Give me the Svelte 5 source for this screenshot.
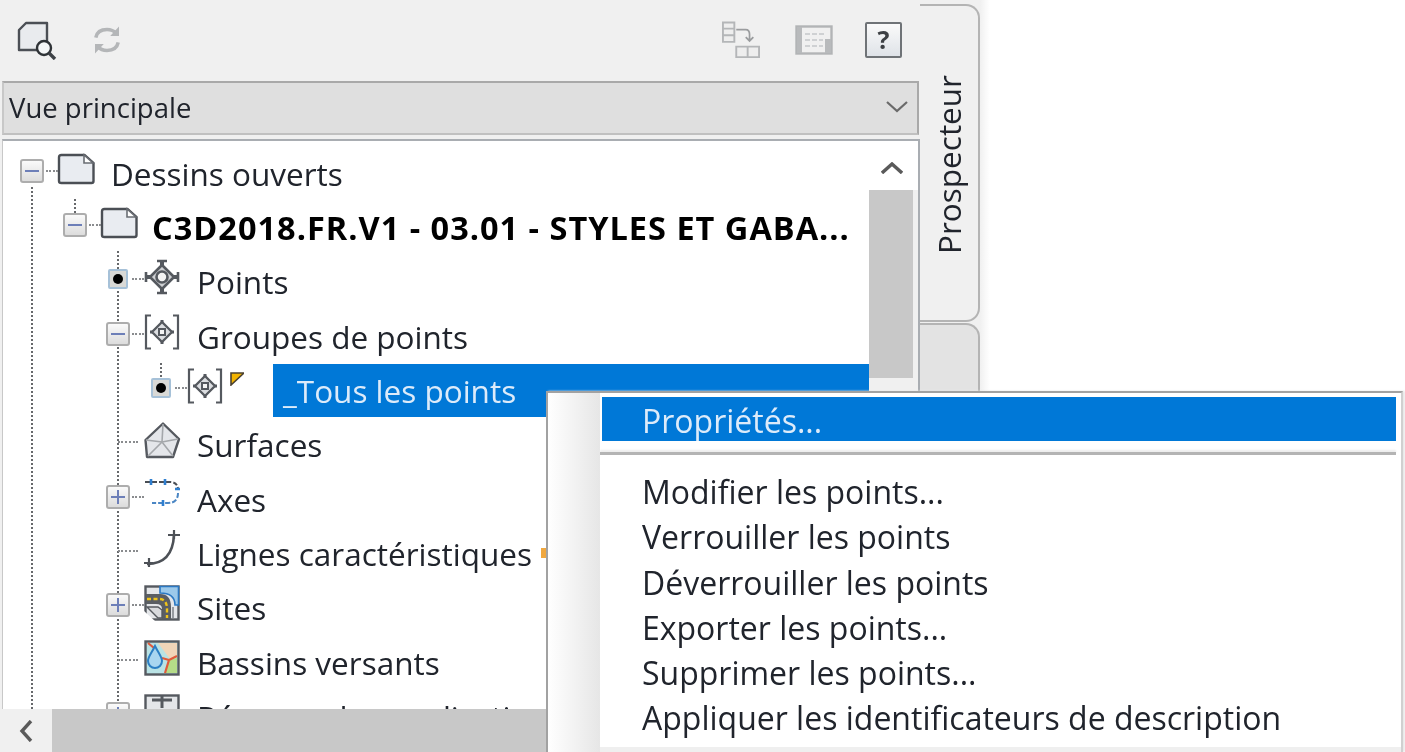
<script lang="ts">
  type Row = { label: string; depth: number; toggle: string; icon: string; bold?: boolean; selected?: boolean; mark?: boolean };

  const rows: Row[] = [
    { label: 'Dessins ouverts', depth: 0, toggle: 'minus', icon: 'doc' },
    { label: 'C3D2018.FR.V1 - 03.01 - STYLES ET GABA...', depth: 1, toggle: 'minus', icon: 'doc', bold: true },
    { label: 'Points', depth: 2, toggle: 'dot', icon: 'point' },
    { label: 'Groupes de points', depth: 2, toggle: 'minus', icon: 'group' },
    { label: '_Tous les points', depth: 3, toggle: 'dot', icon: 'group', selected: true },
    { label: 'Surfaces', depth: 2, toggle: 'none', icon: 'surface' },
    { label: 'Axes', depth: 2, toggle: 'plus', icon: 'axis' },
    { label: 'Lignes caractéristiques', depth: 2, toggle: 'none', icon: 'feature', mark: true },
    { label: 'Sites', depth: 2, toggle: 'plus', icon: 'site' },
    { label: 'Bassins versants', depth: 2, toggle: 'none', icon: 'basin' },
    { label: 'Réseaux de canalisations', depth: 2, toggle: 'plus', icon: 'pipe' }
  ];

  const menuItems = [
    'Modifier les points...',
    'Verrouiller les points',
    'Déverrouiller les points',
    'Exporter les points...',
    'Supprimer les points...',
    'Appliquer les identificateurs de description'
  ];
</script>

{#snippet icon(kind: string)}
  <svg class="icon" viewBox="0 0 36 36" fill="none">
    {#if kind === 'doc'}
      <path d="M1.5 4.5 Q1.5 2 4 2 H27 L36 10 V28 Q36 30 34 30 H4 Q1.5 30 1.5 28 Z" transform="translate(-.5 2)" fill="#e9ecf1" stroke="#4b4f55" stroke-width="2.4" />
      <path d="M26 4 V12 H35 Z" fill="#fff" stroke="#6a6e74" stroke-width="1.6" />
    {:else if kind === 'point'}
      <path d="M18 1 V35 M1 18 H35" stroke="#55595f" stroke-width="4" />
      <path d="M13 2 H23 M13 34 H23 M2 13 V23 M34 13 V23" stroke="#55595f" stroke-width="2.6" />
      <path d="M18 6 L30 18 L18 30 L6 18 Z" fill="#cfd1d4" stroke="#55595f" stroke-width="2.6" stroke-linejoin="round" />
      <circle cx="18" cy="18" r="5.5" fill="#f4f4f4" stroke="#55595f" stroke-width="2.6" />
    {:else if kind === 'group'}
      <path d="M7 1.5 H2 V34.5 H7 M29 1.5 H34 V34.5 H29" stroke="#55595f" stroke-width="2.2" />
      <path d="M18 6 V10 M18 26 V30 M6 18 H10 M26 18 H30" stroke="#55595f" stroke-width="3" />
      <path d="M18 8 L28 18 L18 28 L8 18 Z" fill="#dcdee1" stroke="#55595f" stroke-width="2.4" stroke-linejoin="round" />
      <rect x="15" y="15" width="6" height="6" fill="#f4f4f4" stroke="#55595f" stroke-width="2" />
    {:else if kind === 'surface'}
      <path d="M19 1.5 L35 17 L29 35 H3 L1.5 18 Z" fill="#e4e6ea" stroke="#55595f" stroke-width="2.4" stroke-linejoin="round" />
      <path d="M19 2 L18 20 L29 34 M18 20 L2 18 M18 20 L34 17 M18 20 L4 34" stroke="#a4a7ab" stroke-width="1.6" />
    {:else if kind === 'axis'}
      <path d="M1 5 H26 Q34 5 34 13" stroke="#4a4e54" stroke-width="2" stroke-dasharray="5 2" />
      <path d="M34 16 Q34 26 24 26 H8" stroke="#4a86c4" stroke-width="2" stroke-dasharray="5 2" />
      <path d="M7 2 V8 M21 2 V8 M31 12 H36 M19 23 V29" stroke="#2f7fd0" stroke-width="2.6" />
    {:else if kind === 'feature'}
      <path d="M3 33 C20 33 29 24 30 4" stroke="#4d5157" stroke-width="2.6" />
      <path d="M24 4 H36 M30 -1 V8 M5 27 V36 M0 32 H9" stroke="#4d5157" stroke-width="2.2" />
    {:else if kind === 'site'}
      <rect x="1.5" y="1.5" width="33" height="33" fill="#e4e6e9" stroke="#55595f" stroke-width="2.4" />
      <path d="M16 1.5 H34.5 V20 H31 Q31 8 16 8 Z" fill="#9cc9ea" stroke="#2b78c2" stroke-width="1.6" />
      <path d="M2 9 H16 Q27 9 27 22 V34 H18 V24 Q18 19 12 19 H2 Z" fill="#5a5e63" />
      <path d="M3 14 H15 Q23 14 23 24 V33" stroke="#f0c419" stroke-width="2.4" stroke-dasharray="4 2.5" />
      <path d="M0 26 L11 36 H0 Z" fill="#fff" />
      <path d="M3 22 L14 33 H18 V25 L14 22 Z" fill="#d8dadd" stroke="#55595f" stroke-width="1.4" />
      <path d="M29 22 V34" stroke="#7d8186" stroke-width="1.5" />
    {:else if kind === 'basin'}
      <rect x="1.5" y="1.5" width="33" height="33" fill="#b9e2e4" stroke="#55595f" stroke-width="2.4" />
      <path d="M14 3 H33 V16 L26 19 Z" fill="#f1d5b8" />
      <path d="M25 20 L33 18 V33 H21 Z" fill="#b5dc88" />
      <path d="M33 16 L25 20 L21 33 M25 20 L18 18 M4 3 L10 8" stroke="#e05a3a" stroke-width="2.2" />
      <path d="M11 6 C7 14 4 17 4 21 A7 7 0 0 0 18 21 C18 17 15 14 11 6 Z" fill="#a9d6f0" stroke="#2c7fc4" stroke-width="2" />
    {:else if kind === 'pipe'}
      <rect x="1.5" y="1.5" width="33" height="33" fill="#e4e6e9" stroke="#55595f" stroke-width="2.4" />
      <path d="M8 6 H28 M18 1 V14" stroke="#55595f" stroke-width="3" />
    {/if}
  </svg>
{/snippet}

<div class="screen">
  <div class="palette">
    <div class="panel">
      <div class="toolbar">
        <svg class="tool" viewBox="0 0 40 40" fill="none">
          <path d="M2 10 L9 3 H30 V30 H2 Z" fill="#e9ebee" stroke="#4b4f55" stroke-width="2.4" stroke-linejoin="round" />
          <circle cx="27" cy="28" r="7" fill="#f5f7f8" stroke="#2f3337" stroke-width="2.4" />
          <path d="M32 33 L38 39" stroke="#3d4146" stroke-width="3.4" />
        </svg>
        <svg class="tool refresh" viewBox="0 0 40 40" fill="none">
          <path d="M6 17 Q8 7 20 7 Q27 7 32 12 M34 23 Q32 33 20 33 Q13 33 8 28" stroke="#b4b6b8" stroke-width="4.4" />
          <path d="M35 3 V15 H24 Z M5 37 V25 H16 Z" fill="#b4b6b8" />
        </svg>
        <span class="spacer"></span>
        <svg class="tool flow" viewBox="0 0 40 40" fill="none">
          <path d="M1 1.5 H13 V22 H1 Z M15 27 H39 V38 H15 Z M27 27 V38 M1 8 H13 M1 15 H13" fill="#eee" stroke="#b4b6b8" stroke-width="2" />
          <path d="M15 9 H25 Q29 9 29 14 V20 M25 17 L29 21 L33 17" stroke="#9a9c9e" stroke-width="1.8" />
        </svg>
        <svg class="tool sheet" viewBox="0 0 38 30" fill="none">
          <rect x="1.5" y="1.5" width="35" height="27" fill="#f0f0f0" stroke="#b2b4b6" stroke-width="2.4" />
          <rect x="2" y="2" width="5" height="26" fill="#b8babc" />
          <rect x="30" y="14" width="6" height="14" fill="#b8babc" />
          <path d="M10 9 H30 M10 15 H28 M10 21 H28" stroke="#cfd1d3" stroke-width="2" stroke-dasharray="5 2" />
        </svg>
        <div class="help">?</div>
      </div>

      <div class="combo">
        <span>Vue principale</span>
        <svg class="chevron" viewBox="0 0 22 12" fill="none"><path d="M1 1 L11 10 L21 1" stroke="#6a6a6a" stroke-width="2.2" /></svg>
      </div>

      <div class="tree">
        <div class="tree-body">
          <div class="rows">
            <!-- vertical guides, they run behind the rows -->
            <svg class="guides" width="180" height="570" fill="none">
              <path d="M32 46 V570 M75 58 V72 M118 110 V570 M161 222 V238" stroke="#66686b" stroke-width="2" stroke-dasharray="2 2" />
            </svg>
            {#each rows as row}
              <div class="row" style={`padding-left: ${20 + row.depth * 43}px`}>
                <div class="slot">
                  {#if row.toggle === 'dot'}
                    <span class="node"><i></i></span>
                  {:else if row.toggle === 'minus' || row.toggle === 'plus'}
                    <span class="box" class:plus={row.toggle === 'plus'}></span>
                  {:else}
                    <span class="stub"></span>
                  {/if}
                  {#if row.toggle !== 'none'}<span class="dash"></span>{/if}
                </div>
                {@render icon(row.icon)}
                {#if row.selected}
                  <svg class="flag" viewBox="0 0 14 14"><path d="M1 1 H14 L1 13 Z" fill="#f3b400" stroke="#4b4130" stroke-width="1.6" /></svg>
                  <div class="label selected">{row.label}</div>
                {:else}
                  <div class="label" class:bold={row.bold}>{row.label}</div>
                  {#if row.mark}<span class="mark"></span>{/if}
                {/if}
              </div>
            {/each}
          </div>
          <div class="vscroll">
            <div class="up"><svg viewBox="0 0 22 12" fill="none"><path d="M1 11 L11 2 L21 11" stroke="#5a5a5a" stroke-width="3.4" /></svg></div>
            <div class="vthumb"></div>
          </div>
        </div>
        <div class="hscroll">
          <div class="left"><svg viewBox="0 0 14 22" fill="none"><path d="M12 1 L3 11 L12 21" stroke="#5a5a5a" stroke-width="3.4" /></svg></div>
        </div>
      </div>
    </div>

    <div class="tabs">
      <div class="tab active"><span>Prospecteur</span></div>
      <div class="tab other"></div>
    </div>
  </div>

  <div class="menu">
    <div class="gutter"></div>
    <div class="items">
      <div class="item hot">Propriétés...</div>
      <div class="sep"></div>
      {#each menuItems as item}
        <div class="item">{item}</div>
      {/each}
    </div>
  </div>
</div>

<style>
  :global(body) {
    margin: 0;
    background: #fff;
  }

  .screen {
    position: relative;
    width: 1405px;
    height: 752px;
    overflow: hidden;
    background: #fff;
    font-family: "Open Sans", "Noto Sans", sans-serif;
    font-size: 31.5px;
    color: #20242c;
    filter: blur(0.7px);
  }

  .palette {
    display: flex;
    width: 990px;
    height: 752px;
    background: linear-gradient(to right, #f0f0f0 980px, #f8f8f8 985px, #fff 990px);
  }

  .panel {
    width: 920px;
    display: flex;
    flex-direction: column;
    padding-left: 2px;
    box-sizing: border-box;
  }

  .toolbar {
    height: 81px;
    flex: none;
    display: flex;
    align-items: center;
    padding: 0 18px 1px 15px;
    box-sizing: border-box;
  }

  .tool {
    width: 40px;
    height: 40px;
  }

  .refresh {
    width: 32px;
    height: 32px;
    margin-left: 34px;
  }

  .spacer {
    flex: 1;
  }

  .flow {
    width: 38px;
    height: 38px;
  }

  .sheet {
    width: 38px;
    height: 30px;
    margin-left: 35px;
  }

  .help {
    width: 37px;
    height: 36px;
    margin-left: 32px;
    box-sizing: border-box;
    border: 2px solid #6f7377;
    border-radius: 2px;
    background: linear-gradient(#fafafa, #dfe3e8);
    text-align: center;
    font-weight: 700;
    font-size: 25px;
    line-height: 31px;
    color: #3d4044;
  }

  .combo {
    height: 54px;
    flex: none;
    display: flex;
    align-items: center;
    justify-content: space-between;
    padding: 0 9px 2px 5px;
    box-sizing: border-box;
    background: #dfdfdf;
    border: 2px solid #a9a9a9;
    border-left-color: #c8c8c8;
    border-bottom-color: #c0c0c0;
    font-size: 27.5px;
    margin-right: 1px;
  }

  .chevron {
    width: 22px;
    height: 12px;
  }

  .tree {
    flex: 1;
    min-height: 0;
    margin-top: 4px;
    display: flex;
    flex-direction: column;
    background: #fff;
    border-top: 2px solid #a9adb2;
    border-left: 1px solid #c8c8c8;
    border-right: 2px solid #a9adb2;
  }

  .tree-body {
    flex: 1;
    min-height: 0;
    display: flex;
  }

  .rows {
    position: relative;
    flex: 1;
    overflow: hidden;
    padding-top: 5px;
    margin-left: -3px;
  }

  .guides {
    position: absolute;
    left: 0;
    top: 0;
  }

  .row {
    position: relative;
    height: 54.33px;
    display: flex;
    align-items: center;
    box-sizing: border-box;
  }

  .slot {
    position: relative;
    flex: none;
    width: 38px;
    height: 26px;
    margin-bottom: 5px;
    display: flex;
    align-items: center;
  }

  .box {
    position: relative;
    width: 24px;
    height: 24px;
    box-sizing: border-box;
    border: 2px solid #adadad;
    border-radius: 3px;
    background: linear-gradient(#fafafa, #dcdcdc);
    flex: none;
  }

  .box::before {
    content: "";
    position: absolute;
    left: 3px;
    right: 3px;
    top: 9px;
    height: 2px;
    background: #6d7fb8;
  }

  .box.plus::after {
    content: "";
    position: absolute;
    top: 3px;
    bottom: 3px;
    left: 9px;
    width: 2px;
    background: #6d7fb8;
  }

  .node {
    width: 20px;
    height: 20px;
    margin: 0 2px;
    box-sizing: border-box;
    border: 2px solid #a6c1d8;
    border-radius: 2px;
    background: #d9d9d6;
    display: flex;
    align-items: center;
    justify-content: center;
    flex: none;
  }

  .node i {
    width: 10px;
    height: 10px;
    border-radius: 50%;
    background: #000;
  }

  .dash {
    flex: 1;
    margin-left: 2px;
    border-top: 2px dotted #8a8c8f;
  }

  .stub {
    width: 20px;
    margin-left: 12px;
    border-top: 2px dotted #8a8c8f;
  }

  .icon {
    flex: none;
    width: 36px;
    height: 36px;
    margin-bottom: 9px;
    overflow: visible;
  }

  .label {
    margin-left: 17px;
    white-space: nowrap;
  }

  .bold {
    font-weight: 700;
    font-size: 32.5px;
    letter-spacing: 1px;
    color: #000;
    margin-left: 15px;
  }

  .mark {
    flex: none;
    width: 8px;
    height: 10px;
    margin-left: 9px;
    background: #f0a840;
  }

  .flag {
    flex: none;
    width: 14px;
    height: 14px;
    margin: -22px 0 0 7px;
  }

  .selected {
    flex: 1;
    margin-left: 29px;
    height: 53px;
    line-height: 53px;
    padding-left: 10px;
    background: #0078d7;
    color: #dcebfa;
  }

  .vscroll {
    flex: none;
    width: 49px;
    background: #f0f0f0;
    display: flex;
    flex-direction: column;
  }

  .up {
    height: 49px;
    display: flex;
    align-items: center;
    justify-content: center;
    background: #fff;
    padding: 4px 4px 0 0;
    box-sizing: border-box;
  }

  .up svg {
    width: 22px;
    height: 12px;
  }

  .vthumb {
    height: 188px;
    margin-right: 5px;
    background: #c8c8c8;
  }

  .hscroll {
    flex: none;
    height: 43px;
    background: #c8c8c8;
    margin-left: -3px;
    margin-right: -2px;
  }

  .left {
    width: 52px;
    height: 100%;
    background: #f0f0f0;
    display: flex;
    align-items: center;
    justify-content: center;
  }

  .left svg {
    width: 14px;
    height: 22px;
  }

  .tabs {
    width: 60px;
    display: flex;
    flex-direction: column;
    padding-top: 4px;
    box-sizing: border-box;
  }

  .tab {
    box-sizing: border-box;
    border: 2px solid #b4b4b4;
    border-left: none;
    border-radius: 0 14px 14px 0;
  }

  .active {
    height: 318px;
    background: #f0f0f0;
    display: flex;
    align-items: flex-end;
    justify-content: center;
    padding-bottom: 66px;
  }

  .active span {
    writing-mode: vertical-rl;
    transform: rotate(180deg);
    line-height: 1;
  }

  .other {
    flex: 1;
    margin-top: 1px;
    background: #e3e3e3;
    border-bottom: none;
    border-radius: 0 14px 0 0;
  }

  .menu {
    position: absolute;
    left: 546px;
    top: 391px;
    width: 857px;
    height: 361px;
    box-sizing: border-box;
    display: flex;
    background: #efefef;
    border: 2px solid #a2a2a2;
    border-bottom: none;
    border-right-color: #d0d0d0;
    box-shadow: 2px 0 2px #e8e8e8;
    font-size: 32px;
  }

  .gutter {
    width: 52px;
    flex: none;
    background: linear-gradient(to right, #fff, #e6e6e6);
  }

  .items {
    flex: 1;
    padding-top: 4px;
    margin-bottom: 5px;
    background: #fff;
  }

  .item {
    height: 45.3px;
    line-height: 44px;
    padding-left: 42px;
    white-space: nowrap;
  }

  .hot {
    background: #0078d7;
    color: #dcebfa;
    margin: 0 5px 0 2px;
    padding-left: 40px;
    height: 44px;
    line-height: 47px;
  }

  .sep {
    height: 3px;
    margin: 11px 5px 15px 0;
    background: #b4b4b4;
    box-shadow: 0 -2px 2px #ececec;
  }
</style>
